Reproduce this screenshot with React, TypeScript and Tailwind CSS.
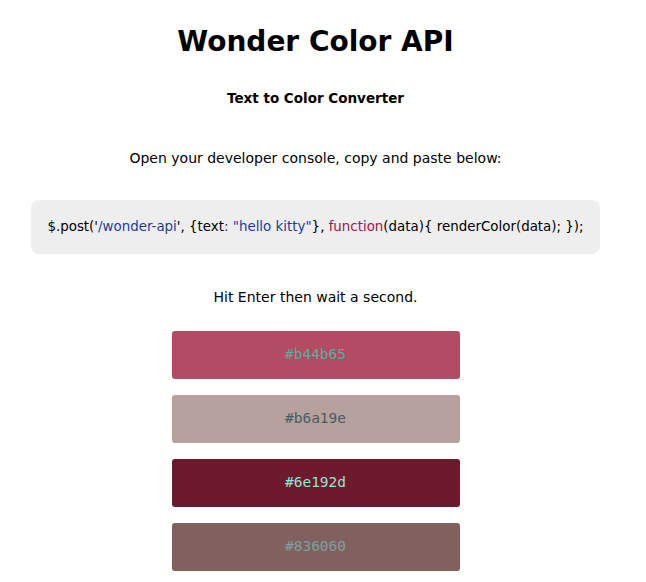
import React from 'react';

const swatches = [
  { bg: 'bg-[#b44b65]', fg: 'text-[#4bb49a]', hex: '#b44b65' },
  { bg: 'bg-[#b6a19e]', fg: 'text-[#495e61]', hex: '#b6a19e' },
  { bg: 'bg-[#6e192d]', fg: 'text-[#91e6d2]', hex: '#6e192d' },
  { bg: 'bg-[#836060]', fg: 'text-[#7c9f9f]', hex: '#836060' },
];

const App: React.FC = () => {
  return (
    <div className="min-h-screen bg-white">
      <div className="w-[631px] text-black font-['Lucida_Grande','DejaVu_Sans',sans-serif] text-[14px] text-center">
        <h1 className="pt-[22px] text-[28px] font-bold leading-[40px]">Wonder Color API</h1>
        <h3 className="mt-[26px] text-[13.5px] font-bold leading-[20px]">Text to Color Converter</h3>
        <p className="mt-[40px] leading-[20px]">Open your developer console, copy and paste below:</p>

        {/* Snippet */}
        <div className="mx-[31px] mt-[32px] rounded-lg bg-[#eeeeee] h-[54px] flex items-center justify-center">
          <code className="font-['Lucida_Grande','DejaVu_Sans',sans-serif] text-[13.4px]">
            $.post('<span className="text-[#1c3c9c]">/wonder-api</span>', {'{'}text
            <span className="text-[#1c3c9c]">: "hello kitty"</span>
            {'}'}, <span className="text-[#a3134f]">function</span>(data){'{'} renderColor(data); {'}'});
          </code>
        </div>

        <p className="mt-[33px] leading-[20px]">Hit Enter then wait a second.</p>

        <div className="mt-[24px] flex flex-col items-center gap-4">
          {swatches.map((s) => (
            <div
              key={s.hex}
              className={`w-[288px] h-[48px] rounded-[3px] flex items-center justify-center font-['DejaVu_Sans_Mono',monospace] text-[14.5px] ${s.bg} ${s.fg}`}
            >
              {s.hex}
            </div>
          ))}
        </div>
      </div>
    </div>
  );
};

export default App;
